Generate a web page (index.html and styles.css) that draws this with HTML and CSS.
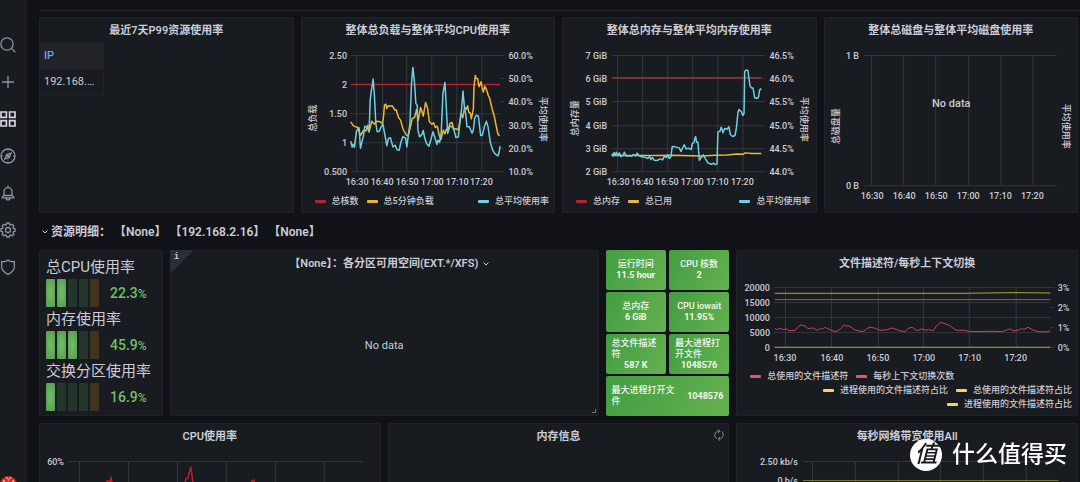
FILE: index.html
```html
<!DOCTYPE html>
<html lang="zh-CN">
<head>
<meta charset="utf-8">
<title>资源监控</title>
<link rel="stylesheet" href="styles.css">
</head>
<body>
<div class="app">
  <nav class="sidebar">
    <a href="#" aria-label="Search"><svg viewBox="0 0 16 16"><circle cx="7" cy="7" r="6.2"/><path d="M11.6 11.6 15.4 15.2"/></svg></a>
    <a href="#" aria-label="Create"><svg viewBox="0 0 16 16"><path d="M8 2v12M2 8h12"/></svg></a>
    <a href="#" aria-label="Dashboards" class="active"><svg viewBox="0 0 16 16"><path d="M1 1h5.4v5.4H1zM9.6 1H15v5.4H9.6zM1 9.6h5.4V15H1zM9.6 9.6H15V15H9.6z"/></svg></a>
    <a href="#" aria-label="Explore"><svg viewBox="0 0 16 16"><circle cx="8" cy="8" r="7"/><path d="M11 5 9.4 9.4 5 11 6.600 6.600zM8 1v1.600M8 13.400V15M1 8h1.600M13.400 8H15"/><circle cx="8" cy="8" r=".6"/></svg></a>
    <a href="#" aria-label="Alerting"><svg viewBox="0 0 16 16"><path d="M8 .6v2M4 10.500V6.600a4 4 0 0 1 8 0V10.500M2.300 12.800V11.800L4 10.500h8l1.700 1.300V12.800zM6 13a2 1.900 0 0 0 4 0"/></svg></a>
    <a href="#" aria-label="Configuration"><svg viewBox="0 0 16 16"><path d="M6.700 1h2.600l.4 1.700 1 .4 1.500-.9 1.700 1.700-.9 1.500.4 1 1.700.4v2.500l-1.700.4-.4 1 .9 1.500-1.700 1.700-1.500-.9-1 .4L9.300 15H6.700l-.4-1.600-1-.4-1.500.9-1.700-1.700.9-1.500-.4-1L.9 9.300V6.800l1.700-.4.4-1-.9-1.500 1.700-1.700 1.500.9 1-.4z"/><circle cx="8" cy="8" r="2.500"/></svg></a>
    <a href="#" aria-label="Server admin"><svg viewBox="0 0 16 16"><path d="M8 1C6 2.600 4 3 1.700 2.600V8c0 3.400 2.600 5.500 6.300 7.300 3.700-1.800 6.300-3.900 6.300-7.300V2.600C12 3 10 2.600 8 1z"/></svg></a>
    <a href="#" aria-label="Profile" class="avatar"><svg viewBox="0 0 18 18"><circle cx="9" cy="9" r="9" fill="#c5201b"/><path d="M6 1h2v2H6zM10 1h2v2h-2zM8 3h2v2H8zM3 4h2v2h2v2H3zM13 4h2v4h-4V6h2z" fill="#f3a9a2"/></svg></a>
  </nav>

  <main class="main">
    <section class="grid">
      <article class="panel span6">
        <h2>最近7天P99资源使用率</h2>
        <table class="ip-table">
          <thead><tr><th scope="col">IP</th></tr></thead>
          <tbody><tr><td>192.168.…</td></tr></tbody>
        </table>
      </article>

      <article class="panel span6">
        <h2>整体总负载与整体平均CPU使用率</h2>
        <svg class="chart" viewBox="301 42 254 148">
          <path class="lines" d="M351 55.500H504M351 84.500H500M351 113.500H500M351 142.500H500M351 171.500H504M356.500 55V172M382.500 55V172M406.500 55V172M431.500 55V172M456.500 55V172M481.500 55V172M500 78.500h4M500 101.500h4M500 125.500h4M500 148.500h4"/>
          <g class="end"><text x="347" y="59">2.50</text><text x="347" y="88">2</text><text x="347" y="117">1.50</text><text x="347" y="146">1</text><text x="347" y="175">0.500</text></g>
          <g><text x="508" y="59">60.0%</text><text x="508" y="82">50.0%</text><text x="508" y="105">40.0%</text><text x="508" y="129">30.0%</text><text x="508" y="152">20.0%</text><text x="508" y="175">10.0%</text></g>
          <g class="mid"><text x="357" y="185">16:30</text><text x="382" y="185">16:40</text><text x="407" y="185">16:50</text><text x="432" y="185">17:00</text><text x="457" y="185">17:10</text><text x="481" y="185">17:20</text>
            <text transform="translate(316 118) rotate(-90)">总负载</text><text transform="translate(540 119) rotate(90)">平均使用率</text></g>
          <svg x="295" y="10" width="265" height="210" viewBox="0 0 795 630">
            <path class="s red" d="M168 223H614"/>
            <path class="s yellow" d="M167 335 175 347 188 352 196 376 205 361 213 362 218 345 222 365 230 333 238 342 244 333 256 335 262 340 265 320 268 285 272 282 275 295 279 287 292 288 299 300 303 299 310 322 316 330 324 358 334 376 339 376 345 352 351 325 358 322 364 299 369 331 376 292 384 318 391 277 397 294 402 334 410 342 415 338 420 352 426 348 432 376 437 388 444 360 449 371 453 357 458 362 464 340 470 337 476 358 483 356 489 359 493 338 497 310 502 323 508 292 513 297 517 287 520 306 525 309 528 326 534 297 536 230 540 196 543 205 547 206 551 230 557 215 560 232 564 246 568 228 574 240 579 257 583 265 590 295 597 320 603 350 608 373 613 377"/>
            <path class="s cyan" d="M167 393 171 411 174 402 178 411 184 363 192 353 196 414 201 393 205 377 209 348 216 352 222 365 225 270 229 240 234 207 238 260 242 340 246 364 252 364 257 352 263 341 269 373 275 407 280 384 286 383 293 410 300 405 306 419 312 420 317 397 323 379 331 384 335 410 340 370 344 340 349 220 353 172 358 220 362 280 366 286 368 360 373 380 380 373 384 361 388 382 394 400 401 408 407 388 413 365 419 383 425 403 428 390 433 397 438 365 443 250 449 217 453 290 457 370 464 347 470 350 475 357 482 382 489 380 494 335 499 295 503 243 507 288 512 319 515 350 522 350 530 369 534 360 538 325 543 315 549 318 556 376 561 375 567 350 573 333 578 350 585 397 592 420 599 431 608 437 611 427 614 408"/>
          </svg>
        </svg>
        <div class="legend">
          <ul><li class="k-red">总核数</li><li class="k-gold">总5分钟负载</li></ul>
          <ul class="right"><li class="k-cyan">总平均使用率</li></ul>
        </div>
      </article>

      <article class="panel span6">
        <h2>整体总内存与整体平均内存使用率</h2>
        <svg class="chart" viewBox="562 42 254 148">
          <path class="lines" d="M612 55.500H765M612 78.500H765M612 101.500H765M612 125.500H765M612 148.500H765M612 171.500H765M617.500 55V172M642.500 55V172M667.500 55V172M692.500 55V172M717.500 55V172M742.500 55V172"/>
          <g class="end"><text x="607" y="59">7 GiB</text><text x="607" y="82">6 GiB</text><text x="607" y="105">5 GiB</text><text x="607" y="129">4 GiB</text><text x="607" y="152">3 GiB</text><text x="607" y="175">2 GiB</text></g>
          <g><text x="769" y="59">46.5%</text><text x="769" y="82">46.0%</text><text x="769" y="105">45.5%</text><text x="769" y="129">45.0%</text><text x="769" y="152">44.5%</text><text x="769" y="175">44.0%</text></g>
          <g class="mid"><text x="618" y="185">16:30</text><text x="642" y="185">16:40</text><text x="667" y="185">16:50</text><text x="692" y="185">17:00</text><text x="717" y="185">17:10</text><text x="742" y="185">17:20</text>
            <text transform="translate(578 118) rotate(-90)">总内存量</text><text transform="translate(801 119) rotate(90)">平均使用率</text></g>
          <svg x="555" y="10" width="265" height="210" viewBox="0 0 795 630">
            <path class="s red" d="M171 203H618"/>
            <path class="s yellow" d="M170 436H300L350 435 440 437 480 435 515 434 545 431 564 432 570 428 590 430 618 430"/>
            <path class="s cyan" d="M170 431 173 437 177 427 180 436 184 426 188 436 193 428 197 439 203 436 208 426 213 437 230 437 235 433 241 437 246 429 252 437 260 440 268 440 278 445 283 438 287 448 292 442 297 450 306 451 314 446 322 449 328 437 334 442 338 434 342 445 347 440 351 409 360 410 372 413 377 424 383 412 387 404 393 416 400 414 408 418 411 400 416 397 421 379 424 396 428 396 432 450 438 442 444 434 450 445 458 458 468 462 475 459 480 463 485 461 488 365 494 363 498 351 503 368 508 355 515 357 521 350 525 373 532 379 539 376 543 355 548 306 551 298 558 305 562 316 566 310 568 185 572 180 578 182 580 200 584 228 589 234 593 234 598 263 602 265 609 262 613 239 618 236"/>
          </svg>
        </svg>
        <div class="legend">
          <ul><li class="k-red">总内存</li><li class="k-gold">总已用</li></ul>
          <ul class="right"><li class="k-cyan">总平均使用率</li></ul>
        </div>
      </article>

      <article class="panel span6">
        <h2>整体总磁盘与整体平均磁盘使用率</h2>
        <svg class="chart" viewBox="824 42 254 168">
          <path class="lines" d="M864 55.500H1056M864 185.500H1056M871.500 55V186M903.500 55V186M935.500 55V186M968.500 55V186M1000.500 55V186M1032.500 55V186"/>
          <g class="end"><text x="859" y="59">1 B</text><text x="859" y="189">0 B</text></g>
          <g class="mid"><text x="872" y="199">16:30</text><text x="904" y="199">16:40</text><text x="936" y="199">16:50</text><text x="968" y="199">17:00</text><text x="1000" y="199">17:10</text><text x="1032" y="199">17:20</text>
            <text transform="translate(839 126) rotate(-90)">总磁盘量</text><text transform="translate(1063 126) rotate(90)">平均使用率</text>
            <text class="nodata" x="951" y="107">No data</text></g>
        </svg>
      </article>
    </section>

    <button class="row-title" type="button"><svg viewBox="0 0 6 6"><path d="M.5 1.500 3 4 5.500 1.500"/></svg>资源明细： 【None】 【192.168.2.16】 【None】</button>

    <section class="grid">
      <article class="panel span3 gauges">
        <div class="gauge"><h3>总CPU使用率</h3><div class="bar"><i class="on"></i><i class="on"></i><i></i><i></i><i class="warn"></i><b>22.3<small>%</small></b></div></div>
        <div class="gauge"><h3>内存使用率</h3><div class="bar"><i class="on"></i><i class="on"></i><i class="on"></i><i></i><i class="warn"></i><b>45.9<small>%</small></b></div></div>
        <div class="gauge"><h3>交换分区使用率</h3><div class="bar"><i class="on"></i><i></i><i></i><i></i><i class="warn"></i><b>16.9<small>%</small></b></div></div>
      </article>

      <article class="panel span10 partitions">
        <span class="info">i</span>
        <h2>【None】：各分区可用空间(EXT.*/XFS) <svg viewBox="0 0 6 6"><path d="M.5 1.500 3 4 5.500 1.500"/></svg></h2>
        <p class="empty">No data</p>
        <span class="resize"></span>
      </article>

      <div class="stats span3">
        <div class="stat"><span>运行时间</span><b>11.5 hour</b></div>
        <div class="stat"><span>CPU 核数</span><b>2</b></div>
        <div class="stat"><span>总内存</span><b>6 GiB</b></div>
        <div class="stat"><span>CPU iowait</span><b>11.95%</b></div>
        <div class="stat"><span>总文件描述符</span><b>587 K</b></div>
        <div class="stat"><span>最大进程打开文件</span><b>1048576</b></div>
        <div class="stat wide"><span>最大进程打开文件</span><b>1048576</b></div>
      </div>

      <article class="panel span8">
        <h2>文件描述符/每秒上下文切换</h2>
        <svg class="chart" viewBox="736 275 342 94">
          <path class="lines" d="M774 287.500H1051M774 302.500H1051M774 317.500H1051M774 332.500H1051M774 347.500H1051M785.500 287V348M831.500 287V348M878.500 287V348M923.500 287V348M969.500 287V348M1016.500 287V348M1051 287.500h4M1051 307.500h4M1051 327.500h4M1051 347.500h4"/>
          <g class="end"><text x="770" y="291">20000</text><text x="770" y="306">15000</text><text x="770" y="321">10000</text><text x="770" y="336">5000</text><text x="770" y="351">0</text></g>
          <g><text x="1058" y="291">3%</text><text x="1058" y="311">2%</text><text x="1058" y="331">1%</text><text x="1058" y="351">0%</text></g>
          <g class="mid"><text x="785" y="361">16:30</text><text x="832" y="361">16:40</text><text x="878" y="361">16:50</text><text x="924" y="361">17:00</text><text x="970" y="361">17:10</text><text x="1016" y="361">17:20</text></g>
          <svg x="730" y="240" width="350" height="180" viewBox="0 0 1050 540">
            <path class="s thin lemon" d="M134 160H700L850 158 962 159M134 322H962"/>
            <path class="s thin pink" d="M134 179H962"/>
            <path class="s thin pink" d="M134 265 141 269 150 265 160 269 172 267 176 272 195 272 203 262 213 255 225 258 234 266 248 264 262 271 272 265 278 268 284 262 295 267 306 272 318 275 332 267 342 255 351 259 358 258 373 269 390 274 403 274 411 266 421 262 437 265 449 271 469 270 489 264 507 272 527 275 535 265 547 262 555 268 563 272 575 267 586 271 597 269 611 272 620 258 633 247 648 252 660 257 674 268 682 271 704 271 722 275 790 274 818 275 840 267 853 273 868 270 875 266 883 268 895 262 909 270 925 275 955 276 962 271"/>
          </svg>
        </svg>
        <div class="legend">
          <ul><li class="k-pink">总使用的文件描述符</li><li class="k-pink">每秒上下文切换次数</li></ul>
          <ul class="right"><li class="k-lemon">进程使用的文件描述符占比</li><li class="k-lemon">总使用的文件描述符占比</li><li class="k-lemon">进程使用的文件描述符占比</li></ul>
        </div>
      </article>

      <article class="panel span8">
        <h2>CPU使用率</h2>
        <svg class="chart" viewBox="39 448 342 60">
          <path class="lines" d="M68 461.500H363M79.500 461V508M128.500 461V508M177.500 461V508M226.500 461V508M275.500 461V508M324.500 461V508"/>
          <g class="end"><text x="64" y="465">60%</text></g>
          <path class="s red" d="M103 494 107 481 109 481 110 483 111 477 114 494 135 500 165 498 184 489 186 479 188 478 191 467 193 482 197 496 230 499 249 494 252 481 254 480 257 490"/>
        </svg>
      </article>

      <article class="panel span8 memory">
        <h2>内存信息</h2>
        <svg class="refresh" viewBox="0 0 12 12"><path d="M3.500 9.700A4.300 4.300 0 0 1 4.600 2.200H6.500M5 .4 6.800 2.200 5 4M8.500 2.300A4.300 4.300 0 0 1 7.400 9.800H5.500M7 8 5.200 9.800 7 11.600"/></svg>
      </article>

      <article class="panel span8">
        <h2>每秒网络带宽使用All</h2>
        <svg class="chart" viewBox="736 448 342 60">
          <path class="lines" d="M803 461.500H1059M812.500 461V508M855.500 461V508M898.500 461V508M940.500 461V508M983.500 461V508M1026.500 461V508"/>
          <g class="end"><text x="798" y="465">2.50 kb/s</text><text x="798" y="484">0 b/s</text></g>
          <path class="s thin olive" d="M803 480.500H1059"/>
        </svg>
      </article>
    </section>
  </main>

  <div class="brand"><span class="seal">值</span>什么值得买</div>
</div>
</body>
</html>
```
FILE: styles.css
```css
* { box-sizing: border-box; margin: 0; padding: 0; }

body {
  background: #111217;
  color: #cbccd6;
  font: 9px/14px Roboto, "Noto Sans CJK SC", sans-serif;
}

.app {
  display: flex;
  height: 100vh;
  overflow: hidden;
}

.sidebar {
  display: flex;
  flex: none;
  flex-direction: column;
  gap: 21px;
  width: 27px;
  padding-top: 37px;
  background: #181b1f;
}
.sidebar a { flex: none; width: 16px; height: 16px; color: #9092a0; }
.sidebar svg {
  display: block;
  width: 16px;
  height: 16px;
  fill: none;
  stroke: currentColor;
  stroke-width: 1.3;
}
.sidebar .active { color: #d3d4de; }
.sidebar .active svg { stroke-width: 1.7; }
.sidebar .avatar { margin-top: auto; margin-bottom: -10px; }
.sidebar .avatar svg { width: 17px; height: 17px; stroke: none; }

.main {
  flex: 1;
  min-width: 0;
  margin: 10px 0 0 12px;
  padding: 6px 2px 0 0;
  border-top: 1px solid #222429;
}

.grid {
  display: grid;
  grid-template-columns: repeat(24, minmax(0, 1fr));
  gap: 7px;
}
.span3 { grid-column: span 3; }
.span6 { grid-column: span 6; }
.span8 { grid-column: span 8; }
.span10 { grid-column: span 10; }

.panel {
  position: relative;
  background: #181b1f;
  border-radius: 2px;
  box-shadow: inset 0 0 0 1px #202227;
}
.panel h2 {
  padding-top: 2px;
  font-size: 11px;
  font-weight: 600;
  line-height: 23px;
  text-align: center;
  white-space: nowrap;
}

.ip-table { width: 65px; border-collapse: collapse; font-size: 11px; }
.ip-table th, .ip-table td {
  height: 26px;
  padding-left: 5px;
  border: 1px solid #202227;
  border-left: 0;
  font-weight: 400;
  text-align: left;
  white-space: nowrap;
}
.ip-table th { background: #222327; color: #6e9fff; font-weight: 500; }

.chart { display: block; width: 100%; height: auto; overflow: hidden; }
.chart text { fill: #cbccd6; font-size: 9px; font-weight: 500; }
.chart .nodata { font-size: 11px; }
.end { text-anchor: end; }
.mid { text-anchor: middle; }
.lines { fill: none; stroke: #34373b; }
.s {
  fill: none;
  stroke-width: 1.5px;
  stroke-linejoin: round;
  vector-effect: non-scaling-stroke;
}
.thin { stroke-width: 1px; }
.red { stroke: #b8202f; }
.yellow { stroke: #eab839; }
.cyan { stroke: #6ed0e0; }
.lemon { stroke: #b5a530; }
.pink { stroke: #c94458; }
.olive { stroke: #77753c; }

.legend {
  display: flex;
  flex-wrap: wrap;
  justify-content: space-between;
  padding: 4px 6px 5px 14px;
  font-weight: 500;
}
.legend ul { display: flex; flex-wrap: wrap; column-gap: 8px; list-style: none; }
.legend .right { justify-content: flex-end; margin-left: auto; }
.legend li { display: flex; align-items: center; gap: 6px; white-space: nowrap; }
.legend li::before {
  content: "";
  width: 11px;
  height: 3px;
  border-radius: 1px;
  background: var(--key);
}
.k-red { --key: #b8202f; }
.k-gold { --key: #eab839; }
.k-cyan { --key: #6ed0e0; }
.k-pink { --key: #e0566c; }
.k-lemon { --key: #f2d94a; }
.panel.span8 .legend { padding-top: 0; }

.row-title {
  display: flex;
  align-items: center;
  gap: 3px;
  height: 37px;
  padding-left: 3px;
  border: 0;
  background: none;
  color: inherit;
  font: 600 12px/16px Roboto, "Noto Sans CJK SC", sans-serif;
  white-space: pre;
}
.row-title svg, .partitions h2 svg {
  width: 6px;
  height: 6px;
  fill: none;
  stroke: currentColor;
}

.gauges { padding: 5px 7px 0; }
.gauge h3 { font-size: 15px; font-weight: 400; line-height: 24px; white-space: nowrap; }
.bar { display: flex; align-items: center; gap: 2px; height: 28px; }
.bar i { width: 9px; height: 28px; border-radius: 1px; background: #24352b; }
.bar .on { background: radial-gradient(#73bf69, #579a50); }
.bar .warn { background: #40341f; }
.bar b { margin-left: 9px; color: #73bf69; font-size: 14px; font-weight: 500; }
.bar small { font-size: 12px; }

.partitions { display: flex; flex-direction: column; }
.partitions h2 { padding-left: 10px; }
.empty { flex: 1; padding-top: 64px; font-size: 11px; text-align: center; }
.partitions h2 svg { margin-left: 2px; }
.info {
  position: absolute;
  top: 0;
  left: 0;
  width: 24px;
  height: 24px;
  padding-left: 4px;
  background: linear-gradient(135deg, #2a2d33 50%, transparent 50%);
  font: bold 9px/14px "Liberation Mono", monospace;
}
.resize {
  position: absolute;
  right: 3px;
  bottom: 3px;
  width: 4px;
  height: 4px;
  border: solid #6d6f77;
  border-width: 0 1px 1px 0;
}

.stats {
  display: grid;
  grid-template-columns: 1fr 1fr;
  grid-auto-rows: 40px;
  gap: 2px 3px;
  line-height: 11px;
}
.stat {
  display: flex;
  flex-direction: column;
  align-items: center;
  justify-content: center;
  padding: 0 6px;
  border-radius: 2px;
  background: linear-gradient(120deg, #429d42, #65b150);
  color: #f3f8f0;
  font-weight: 500;
}
.stat b { font-size: 9px; font-weight: 700; }
.wide { flex-direction: row; grid-column: span 2; gap: 8px; }

.refresh {
  position: absolute;
  top: 6px;
  right: 4px;
  width: 12px;
  height: 12px;
  fill: none;
  stroke: #85878f;
}

.brand {
  position: fixed;
  right: 13px;
  bottom: 11px;
  display: flex;
  align-items: center;
  gap: 10px;
  color: #fff;
  font-size: 23px;
  font-weight: 500;
  line-height: 32px;
}
.seal {
  width: 32px;
  height: 32px;
  border-radius: 50%;
  background: #fff;
  color: #17191d;
  font-size: 23px;
  font-style: italic;
  line-height: 31px;
  text-align: center;
}
```
